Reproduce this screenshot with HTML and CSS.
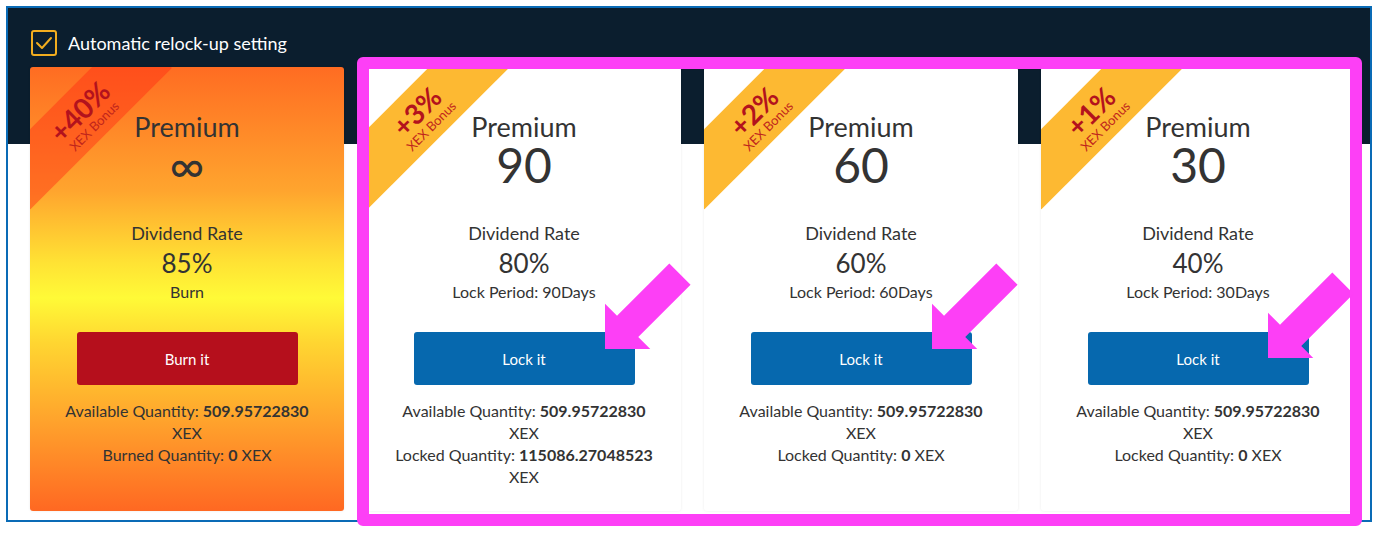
FILE: index.html
```html
<!DOCTYPE html>
<html lang="en">
<head>
    <meta charset="UTF-8">
    <link rel="stylesheet" href="styles.css">
</head>
<body>
    <div class="painel">
        <label class="relock">
            <span class="caixa">
                <svg width="18" height="14" viewBox="0 0 18 14"><polyline points="2,7 7,12 16,2" fill="none" stroke="#f2ad1f" stroke-width="2" stroke-linecap="round" stroke-linejoin="round"/></svg>
            </span>
            Automatic relock-up setting
        </label>

        <div class="planos">
            <div class="plano plano-burn">
                <div class="faixa"><span class="bonus">+40%</span><span class="bonus-txt">XEX Bonus</span></div>
                <div class="nome">Premium</div>
                <div class="dias infinito">&infin;</div>
                <div class="taxa-titulo">Dividend Rate</div>
                <div class="taxa">85%</div>
                <div class="obs">Burn</div>
                <button class="botao botaoBurn">Burn it</button>
                <div class="qtd">Available Quantity: <b>509.95722830</b> XEX<br>Burned Quantity: <b>0</b> XEX</div>
            </div>

            <div class="plano">
                <div class="faixa"><span class="bonus">+3%</span><span class="bonus-txt">XEX Bonus</span></div>
                <div class="nome">Premium</div>
                <div class="dias">90</div>
                <div class="taxa-titulo">Dividend Rate</div>
                <div class="taxa">80%</div>
                <div class="obs">Lock Period: 90Days</div>
                <button class="botao">Lock it</button>
                <div class="qtd">Available Quantity: <b>509.95722830</b> XEX<br>Locked Quantity: <b>115086.27048523</b> XEX</div>
            </div>

            <div class="plano">
                <div class="faixa"><span class="bonus">+2%</span><span class="bonus-txt">XEX Bonus</span></div>
                <div class="nome">Premium</div>
                <div class="dias">60</div>
                <div class="taxa-titulo">Dividend Rate</div>
                <div class="taxa">60%</div>
                <div class="obs">Lock Period: 60Days</div>
                <button class="botao">Lock it</button>
                <div class="qtd">Available Quantity: <b>509.95722830</b> XEX<br>Locked Quantity: <b>0</b> XEX</div>
            </div>

            <div class="plano">
                <div class="faixa"><span class="bonus">+1%</span><span class="bonus-txt">XEX Bonus</span></div>
                <div class="nome">Premium</div>
                <div class="dias">30</div>
                <div class="taxa-titulo">Dividend Rate</div>
                <div class="taxa">40%</div>
                <div class="obs">Lock Period: 30Days</div>
                <button class="botao">Lock it</button>
                <div class="qtd">Available Quantity: <b>509.95722830</b> XEX<br>Locked Quantity: <b>0</b> XEX</div>
            </div>
        </div>
    </div>

    <!-- marcacoes por cima da captura -->
    <div class="destaque"></div>
    <svg class="setas" width="1382" height="535" viewBox="0 0 1382 535">
        <g fill="#fd3ff6">
            <polygon transform="translate(605 349) rotate(135)" points="0,0 -32,-32 -32,-15 -106,-15 -106,15 -32,15 -32,32"/>
            <polygon transform="translate(932 349) rotate(135)" points="0,0 -32,-32 -32,-15 -106,-15 -106,15 -32,15 -32,32"/>
            <polygon transform="translate(1268 358) rotate(135)" points="0,0 -32,-32 -32,-15 -106,-15 -106,15 -32,15 -32,32"/>
        </g>
    </svg>
</body>
</html>
```

FILE: styles.css
```css
body {
    margin: 0;
    padding: 6px;
    font-family: "Lato", "Noto Sans", sans-serif;
    background-color: #fff;
    color: #333;
}

.painel {
    width: 1366px;
    height: 516px;
    box-sizing: border-box;
    border: 2px solid #0a6bb6;
    padding: 22px 15px 9px 22px;
    background: linear-gradient(to bottom, #0b1e2e 0, #0b1e2e 136px, #fff 136px);
}

.relock {
    display: flex;
    align-items: center;
    gap: 11px;
    height: 26px;
    margin-left: 1px;
    color: #fff;
    font-size: 18px;
}

.caixa {
    width: 26px;
    height: 26px;
    box-sizing: border-box;
    border: 2px solid #f2ad1f;
    border-radius: 3px;
    display: flex;
    align-items: center;
    justify-content: center;
}

.planos {
    display: flex;
    gap: 23px;
    margin-top: 11px;
}

.plano {
    position: relative;
    overflow: hidden;
    width: 314px;
    height: 444px;
    box-sizing: border-box;
    padding-top: 45px;
    background-color: #fff;
    border-radius: 3px;
    box-shadow: 0 0 3px rgba(0, 0, 0, 0.08);
    display: flex;
    flex-direction: column;
    align-items: center;
    text-align: center;
}

.plano-burn {
    background: linear-gradient(to bottom, #ff6c22 0%, #ffa52e 28%, #ffe234 44%, #fffa37 52%, #ffd631 62%, #ffa22c 80%, #ff6822 100%);
}

.faixa {
    position: absolute;
    left: -49px;
    top: 23px;
    width: 200px;
    height: 57px;
    box-sizing: border-box;
    padding: 9px 0 0 8px;
    transform: rotate(-45deg);
    background-color: #fdb932;
    display: flex;
    flex-direction: column;
    align-items: center;
}

.plano-burn .faixa {
    background-color: rgba(255, 45, 20, 0.45);
}

.bonus {
    font-size: 28px;
    line-height: 27px;
    font-weight: 700;
    color: #b3121d;
}

.bonus-txt {
    font-size: 13px;
    line-height: 15px;
    color: #c0251c;
}

.nome {
    font-size: 27px;
    line-height: 30px;
}

.dias {
    font-size: 48px;
    line-height: 46px;
}

.taxa-titulo {
    margin-top: 34px;
    font-size: 18px;
    line-height: 22px;
}

.taxa {
    margin-top: 4px;
    font-size: 26px;
    line-height: 30px;
}

.obs {
    margin-top: 3px;
    font-size: 16px;
    line-height: 22px;
}

.botao {
    margin-top: 29px;
    width: 221px;
    height: 53px;
    border: none;
    border-radius: 3px;
    background-color: #0668ae;
    color: #fff;
    font-family: inherit;
    font-size: 15px;
    cursor: pointer;
}

.botaoBurn {
    background-color: #b50f1c;
}

.qtd {
    margin-top: 15px;
    padding: 0 24px;
    font-size: 16px;
    line-height: 22px;
}

.destaque {
    position: absolute;
    left: 357px;
    top: 57px;
    width: 1005px;
    height: 469px;
    box-sizing: border-box;
    border: 12px solid #fd3ff6;
    border-radius: 6px;
}

.setas {
    position: absolute;
    left: 0;
    top: 0;
    pointer-events: none;
}
```
